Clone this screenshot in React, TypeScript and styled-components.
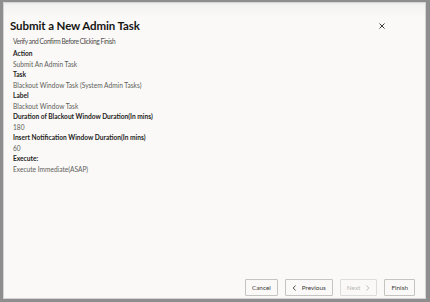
import * as React from "react";
import styled, { createGlobalStyle } from "styled-components";

const GlobalStyle = createGlobalStyle`
  html, body {
    margin: 0;
    padding: 0;
    background: #8e8e8e;
  }
  #root {
    height: 302px;
    padding: 2px 4px 3px 3px;
    box-sizing: border-box;
  }
`;

const Dialog = styled.div`
  height: 100%;
  box-sizing: border-box;
  display: flex;
  flex-direction: column;
  background: linear-gradient(#e9e9e9 0, #f3f3f2 2px, #f7f6f5 9px, #faf9f8 14px);
  border: 1px solid #d4d4d4;
  font-family: Lato, "Noto Sans", sans-serif;
  color: #161513;
`;

const Header = styled.div`
  display: flex;
  align-items: center;
  justify-content: space-between;
  padding: 15px 38px 0 6px;
`;

const Title = styled.h1`
  margin: 0;
  font-size: 11.5px;
  line-height: 16px;
  font-weight: 700;
  letter-spacing: -0.1px;
`;

const CloseButton = styled.button`
  border: none;
  background: transparent;
  padding: 0;
  width: 10px;
  height: 10px;
  display: flex;
  align-items: center;
  justify-content: center;
  color: #3a3a3a;
  cursor: pointer;
`;

const Body = styled.div`
  flex: 1;
  padding: 2px 9px 0;
`;

const Intro = styled.div`
  font-size: 6.6px;
  line-height: 10.5px;
  letter-spacing: -0.4px;
  color: #4e4d4a;
  margin-bottom: 1.5px;
`;

const Line = styled.div<{ $bold?: boolean }>`
  font-size: 6.6px;
  line-height: 10.5px;
  font-weight: ${(p) => (p.$bold ? 700 : 400)};
  color: ${(p) => (p.$bold ? "#1e1d1b" : "#5e5d59")};
`;

const Footer = styled.div`
  display: flex;
  justify-content: flex-end;
  gap: 7px;
  padding: 0 10px 2px;
`;

const Button = styled.button<{ $disabled?: boolean }>`
  height: 17px;
  box-sizing: border-box;
  padding: 0 6px;
  display: flex;
  align-items: center;
  gap: 5px;
  border: 1px solid ${(p) => (p.$disabled ? "#dcdcdc" : "#c4c4c2")};
  background: #faf9f8;
  border-radius: 1px;
  font-family: Lato, "Noto Sans", sans-serif;
  font-size: 6.4px;
  color: ${(p) => (p.$disabled ? "#b8b8b6" : "#3c3b39")};
  cursor: ${(p) => (p.$disabled ? "default" : "pointer")};
`;

const Chevron = ({ dir }: { dir: "left" | "right" }) => (
  <svg width="5" height="6" viewBox="0 0 5 6" fill="none">
    <path
      d={dir === "left" ? "M3.5 0.5 L1.2 3 L3.5 5.5" : "M1.5 0.5 L3.8 3 L1.5 5.5"}
      stroke="currentColor"
      strokeWidth="0.9"
    />
  </svg>
);

const rows: [string, string][] = [
  ["Action", "Submit An Admin Task"],
  ["Task", "Blackout Window Task (System Admin Tasks)"],
  ["Label", "Blackout Window Task"],
  ["Duration of Blackout Window Duration(In mins)", "180"],
  ["Insert Notification Window Duration(In mins)", "60"],
  ["Execute:", "Execute Immediate(ASAP)"],
];

export default function App() {
  return (
    <>
      <GlobalStyle />
      <Dialog>
        <Header>
          <Title>Submit a New Admin Task</Title>
          <CloseButton aria-label="Close">
            <svg width="6" height="6" viewBox="0 0 6 6">
              <path d="M0.5 0.5 L5.5 5.5 M5.5 0.5 L0.5 5.5" stroke="currentColor" strokeWidth="1" />
            </svg>
          </CloseButton>
        </Header>
        <Body>
          <Intro>Verify and Confirm Before Clicking Finish</Intro>
          {rows.map(([label, value]) => (
            <React.Fragment key={label}>
              <Line $bold>{label}</Line>
              <Line>{value}</Line>
            </React.Fragment>
          ))}
        </Body>
        <Footer>
          <Button>Cancel</Button>
          <Button>
            <Chevron dir="left" />
            Previous
          </Button>
          <Button $disabled>
            Next
            <Chevron dir="right" />
          </Button>
          <Button>Finish</Button>
        </Footer>
      </Dialog>
    </>
  );
}
